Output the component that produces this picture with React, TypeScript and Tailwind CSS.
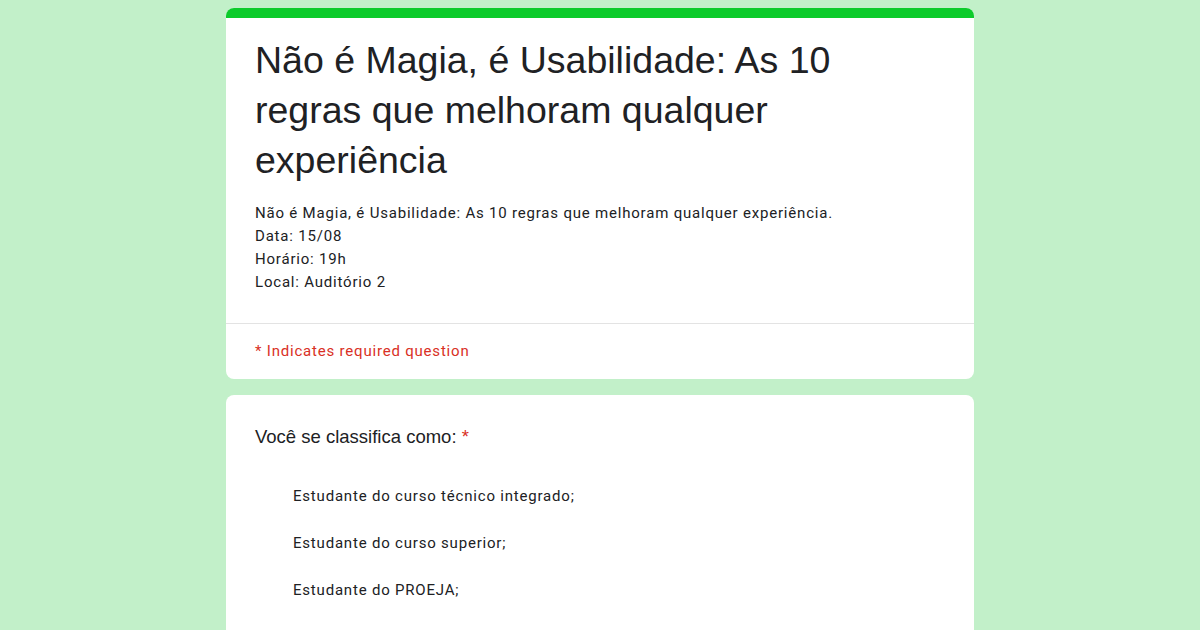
export default function App() {
  const options = [
    'Estudante do curso técnico integrado;',
    'Estudante do curso superior;',
    'Estudante do PROEJA;',
    'Estudante de pós-graduação;',
  ];

  return (
    <div className="h-[630px] w-[1200px] overflow-hidden bg-[#c2f0c9]">
      <div className="mx-auto flex w-[748px] flex-col gap-4 pt-2">
        {/* Header card */}
        <div className="overflow-hidden rounded-lg bg-white">
          <div className="h-[10px] bg-[#0ccb2b]" />
          <div className="px-[29px] pt-[17px] pb-[29px]">
            <h1 className="max-w-[620px] font-['Liberation_Sans',Arial,sans-serif] text-[37.5px] leading-[50px] text-[#202124]">
              Não é Magia, é Usabilidade: As 10 regras que melhoram qualquer experiência
            </h1>
            <div className="mt-[17px] font-['Roboto',sans-serif] text-[15px] leading-[23px] tracking-[0.8px] text-[#202124]">
              <p>Não é Magia, é Usabilidade: As 10 regras que melhoram qualquer experiência.</p>
              <p>Data: 15/08</p>
              <p>Horário: 19h</p>
              <p>Local: Auditório 2</p>
            </div>
          </div>
          <div className="h-px bg-[#e3e3e3]" />
          <div className="px-[29px] pt-[16px] pb-[16px] font-['Roboto',sans-serif] text-[15px] leading-[23px] tracking-[0.8px] text-[#d93025]">
            * Indicates required question
          </div>
        </div>

        {/* Question card */}
        <div className="rounded-lg bg-white px-[29px] pt-[30px] pb-6">
          <div className="font-['Liberation_Sans',Arial,sans-serif] text-[18.5px] leading-[24px] text-[#202124]">
            Você se classifica como: <span className="text-[#d93025]">*</span>
          </div>
          <div className="mt-[36px] flex flex-col gap-[24px] pl-[38px] font-['Roboto',sans-serif] text-[15px] leading-[23px] tracking-[0.8px] text-[#202124]">
            {options.map((o) => (
              <div key={o}>{o}</div>
            ))}
          </div>
        </div>
      </div>
    </div>
  );
}
